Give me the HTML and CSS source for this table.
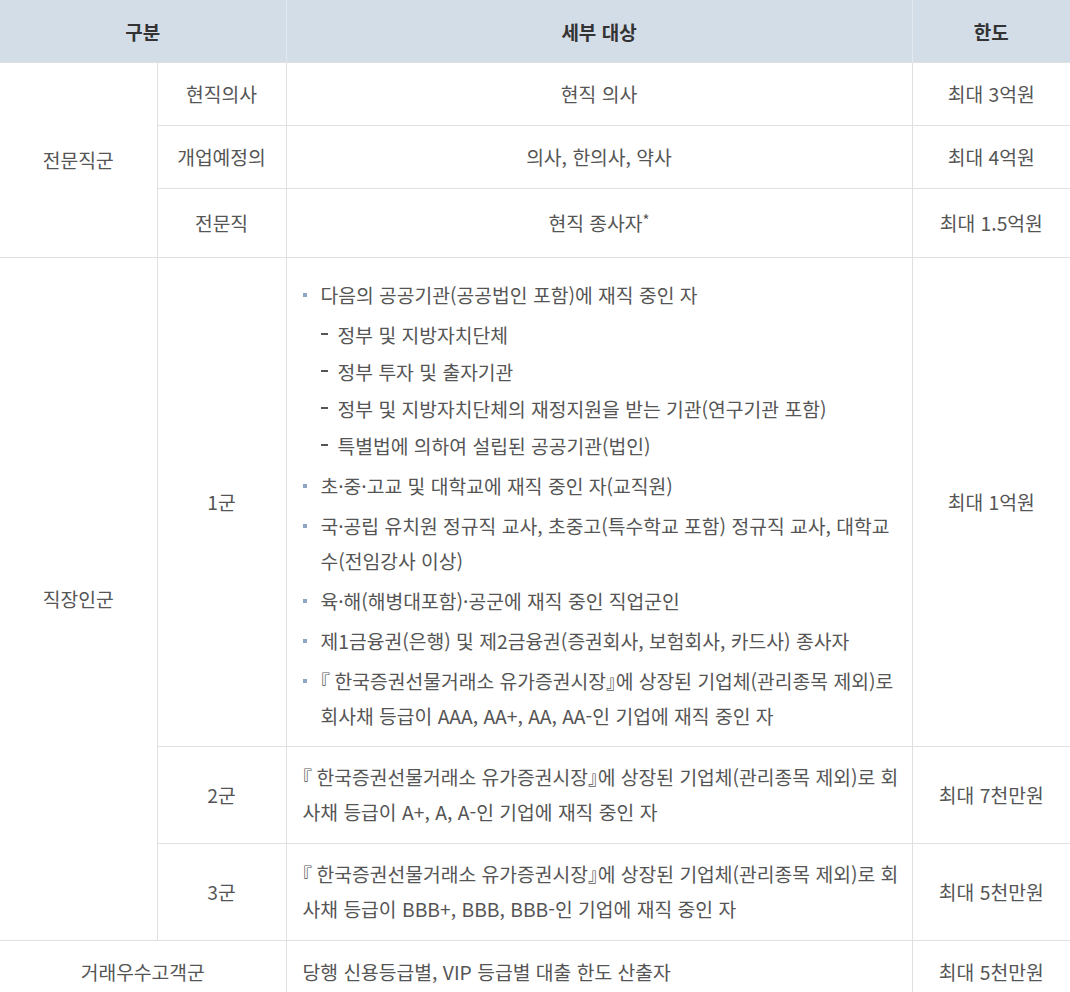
FILE: index.html
```html
<!DOCTYPE html>
<html lang="ko">
<head>
<meta charset="utf-8">
<link rel="stylesheet" href="styles.css">
</head>
<body>
<table class="limit-table">
  <colgroup>
    <col class="c1"><col class="c2"><col class="c3"><col class="c4">
  </colgroup>
  <thead>
    <tr>
      <th colspan="2">구분</th>
      <th>세부 대상</th>
      <th>한도</th>
    </tr>
  </thead>
  <tbody>
    <tr>
      <td rowspan="3" class="center">전문직군</td>
      <td class="center">현직의사</td>
      <td class="center">현직 의사</td>
      <td class="center">최대 3억원</td>
    </tr>
    <tr>
      <td class="center">개업예정의</td>
      <td class="center">의사, 한의사, 약사</td>
      <td class="center">최대 4억원</td>
    </tr>
    <tr class="tall">
      <td class="center">전문직</td>
      <td class="center">현직 종사자<sup>*</sup></td>
      <td class="center">최대 1.5억원</td>
    </tr>
    <tr>
      <td rowspan="3" class="center">직장인군</td>
      <td class="center">1군</td>
      <td class="list-cell">
        <ul class="bullets">
          <li>다음의 공공기관(공공법인 포함)에 재직 중인 자
            <ul class="dashes">
              <li>정부 및 지방자치단체</li>
              <li>정부 투자 및 출자기관</li>
              <li>정부 및 지방자치단체의 재정지원을 받는 기관(연구기관 포함)</li>
              <li>특별법에 의하여 설립된 공공기관(법인)</li>
            </ul>
          </li>
          <li>초·중·고교 및 대학교에 재직 중인 자(교직원)</li>
          <li>국·공립 유치원 정규직 교사, 초중고(특수학교 포함) 정규직 교사, 대학교<br>수(전임강사 이상)</li>
          <li>육·해(해병대포함)·공군에 재직 중인 직업군인</li>
          <li>제1금융권(은행) 및 제2금융권(증권회사, 보험회사, 카드사) 종사자</li>
          <li><span class="br-open">『</span>한국증권선물거래소 유가증권시장<span class="br-close">』</span>에 상장된 기업체(관리종목 제외)로<br>회사채 등급이 AAA, AA+, AA, AA-인 기업에 재직 중인 자</li>
        </ul>
      </td>
      <td class="center">최대 1억원</td>
    </tr>
    <tr>
      <td class="center">2군</td>
      <td class="text-cell"><span class="br-open">『</span>한국증권선물거래소 유가증권시장<span class="br-close">』</span>에 상장된 기업체(관리종목 제외)로 회<br>사채 등급이 A+, A, A-인 기업에 재직 중인 자</td>
      <td class="center">최대 7천만원</td>
    </tr>
    <tr>
      <td class="center">3군</td>
      <td class="text-cell"><span class="br-open">『</span>한국증권선물거래소 유가증권시장<span class="br-close">』</span>에 상장된 기업체(관리종목 제외)로 회<br>사채 등급이 BBB+, BBB, BBB-인 기업에 재직 중인 자</td>
      <td class="center">최대 5천만원</td>
    </tr>
    <tr>
      <td colspan="2" class="center">거래우수고객군</td>
      <td class="text-cell">당행 신용등급별, VIP 등급별 대출 한도 산출자</td>
      <td class="center">최대 5천만원</td>
    </tr>
  </tbody>
</table>
</body>
</html>
```

FILE: styles.css
```css
html, body {
  margin: 0;
  padding: 0;
  background: #ffffff;
}

body {
  font-family: "Noto Sans CJK KR", "Noto Sans", sans-serif;
  font-size: 19.3px;
  color: #555555;
}

.limit-table {
  width: 1070px;
  border-collapse: collapse;
  table-layout: fixed;
}

.c1 { width: 157px; }
.c2 { width: 129px; }
.c3 { width: 626px; }
.c4 { width: 158px; }

.limit-table th {
  height: 62px;
  padding: 0;
  background: #d3dde8;
  color: #333333;
  font-weight: bold;
  font-size: 19px;
  line-height: 35px;
  border-left: 1px solid #e3e8ee;
  text-align: center;
  vertical-align: middle;
}

.limit-table th:first-child {
  border-left: none;
}

.limit-table td {
  border: 1px solid #e0e0e0;
  padding: 14px 4px 13px 16px;
  line-height: 35px;
  vertical-align: middle;
}

.limit-table tr td:first-child {
  border-left: none;
}

.limit-table tr td:last-child {
  border-right: none;
}

.limit-table td.center {
  text-align: center;
  padding-left: 4px;
  padding-right: 4px;
}

.limit-table td.text-cell,
.limit-table td.list-cell {
  white-space: nowrap;
}

.limit-table td.text-cell {
  padding-top: 13px;
  padding-bottom: 13px;
}

.limit-table tr.tall td {
  padding-top: 17px;
  padding-bottom: 16px;
}

.limit-table td.list-cell {
  padding: 20px 4px 12px 16px;
}

sup {
  font-size: 15px;
  line-height: 0;
  vertical-align: 5px;
}

.bullets {
  list-style: none;
  margin: 0;
  padding: 0;
}

.bullets > li {
  position: relative;
  padding-left: 18px;
  margin-top: 5px;
}

.bullets > li:first-child {
  margin-top: 0;
}

.bullets > li::before {
  content: "";
  position: absolute;
  left: 0;
  top: 15px;
  width: 4px;
  height: 4px;
  background: #8ea6c4;
}

.dashes {
  list-style: none;
  margin: 5px 0 0 0;
  padding: 0;
}

.dashes > li {
  position: relative;
  padding-left: 17px;
  margin-top: 2px;
}

.dashes > li:first-child {
  margin-top: 0;
}

.dashes > li::before {
  content: "";
  position: absolute;
  left: 0;
  top: 15px;
  width: 7px;
  height: 2px;
  background: #555555;
}

.br-open {
  display: inline-block;
  width: 14px;
  font-feature-settings: "halt";
  text-align: left;
}

.br-close {
  font-feature-settings: "halt";
}
```
